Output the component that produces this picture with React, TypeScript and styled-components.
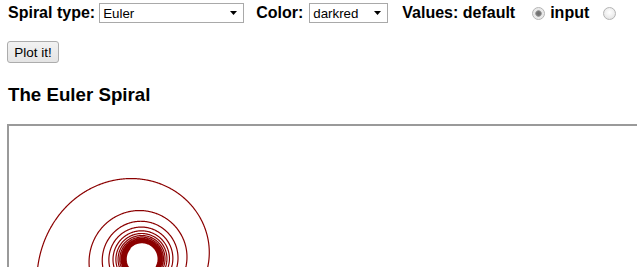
import styled, { createGlobalStyle } from 'styled-components'

const GlobalStyle = createGlobalStyle`
  html, body {
    margin: 0;
    padding: 0;
    overflow: hidden;
    background: #fff;
  }
  body {
    font-family: "Liberation Sans", Arial, sans-serif;
    color: #000;
  }
`;

const Page = styled.div`
  padding: 3px 7px 0;
`;

const Toolbar = styled.div`
  display: flex;
  align-items: center;
  height: 20px;
  white-space: nowrap;
`;

const Label = styled.span<{ $gap?: number }>`
  font-size: 16px;
  font-weight: bold;
  margin-left: ${(p) => p.$gap ?? 0}px;
`;

const SelectWrap = styled.div<{ $width: number; $gap: number }>`
  position: relative;
  width: ${(p) => p.$width}px;
  height: 20px;
  margin-left: ${(p) => p.$gap}px;
`;

const Select = styled.select`
  appearance: none;
  -webkit-appearance: none;
  box-sizing: border-box;
  width: 100%;
  height: 100%;
  margin: 0;
  padding: 0 0 0 3px;
  border: 1px solid #a9a9a9;
  border-radius: 0;
  background: #fff;
  color: #000;
  font-family: "Liberation Sans", Arial, sans-serif;
  font-size: 13.33px;
  outline: none;
`;

const Arrow = styled.svg`
  position: absolute;
  right: 7px;
  top: 8px;
  pointer-events: none;
`;

const Radio = styled.input.attrs({ type: 'radio' })<{ $gap: number }>`
  appearance: none;
  -webkit-appearance: none;
  box-sizing: border-box;
  width: 13px;
  height: 13px;
  margin: 0 0 0 ${(p) => p.$gap}px;
  border: 1px solid #b4b4b4;
  border-radius: 50%;
  background: radial-gradient(circle at 50% 40%, #ffffff 0, #f1f1f1 45%, #dcdcdc 100%);

  &:checked {
    background: radial-gradient(circle, #6e6e6e 0, #777 2px, #a4a4a4 3px, #e6e6e6 3.6px, #f4f4f4 100%);
  }
`;

const ButtonRow = styled.div`
  margin-top: 18px;
`;

const Button = styled.button`
  box-sizing: border-box;
  width: 52px;
  height: 22px;
  padding: 0;
  border: 1px solid #acacac;
  border-radius: 3px;
  background: linear-gradient(#f2f2f2, #e4e4e4);
  color: #000;
  font-family: "Liberation Sans", Arial, sans-serif;
  font-size: 13.5px;
`;

const Heading = styled.h3`
  margin: 21px 0 19px 1px;
  font-size: 18.72px;
  line-height: 21px;
  font-weight: bold;
`;

const Canvas = styled.div`
  width: 640px;
  height: 640px;
  border: 2px solid #9a9a9a;
`;

// Euler (Cornu) spiral: x = ∫cos(u²), y = ∫sin(u²)
const spiralPath = (cx: number, cy: number, scale: number, tMax: number, dt: number) => {
  const branch = (sign: number) => {
    let x = 0;
    let y = 0;
    let d = `M${cx.toFixed(2)} ${cy.toFixed(2)}`;
    for (let t = 0; t < tMax; t += dt) {
      const u = t + dt / 2;
      x += Math.cos(u * u) * dt;
      y += Math.sin(u * u) * dt;
      d += `L${(cx + sign * x * scale).toFixed(2)} ${(cy + sign * y * scale).toFixed(2)}`;
    }
    return d;
  };
  return branch(1) + branch(-1);
};

const SPIRAL = spiralPath(321, 321, 300, 9.5, 0.002);

const DropArrow = () => (
  <Arrow width="7" height="4" viewBox="0 0 7 4">
    <polygon points="0,0 7,0 3.5,4" fill="#000" />
  </Arrow>
);

const App = () => {
  return (
    <Page>
      <GlobalStyle />
      <Toolbar>
        <Label $gap={1}>Spiral type:</Label>
        <SelectWrap $width={145} $gap={4}>
          <Select defaultValue="Euler">
            <option>Euler</option>
            <option>Archimedean</option>
            <option>Logarithmic</option>
          </Select>
          <DropArrow />
        </SelectWrap>
        <Label $gap={12}>Color:</Label>
        <SelectWrap $width={79} $gap={6}>
          <Select defaultValue="darkred">
            <option>darkred</option>
            <option>black</option>
            <option>blue</option>
          </Select>
          <DropArrow />
        </SelectWrap>
        <Label $gap={14}>Values: default</Label>
        <Radio name="values" $gap={17} defaultChecked />
        <Label $gap={5}>input</Label>
        <Radio name="values" $gap={14} />
      </Toolbar>
      <ButtonRow>
        <Button>Plot it!</Button>
      </ButtonRow>
      <Heading>The Euler Spiral</Heading>
      <Canvas>
        <svg width="640" height="640" viewBox="0 0 640 640">
          <path d={SPIRAL} fill="none" stroke="darkred" strokeWidth="1.2" />
        </svg>
      </Canvas>
    </Page>
  );
};

export default App;
